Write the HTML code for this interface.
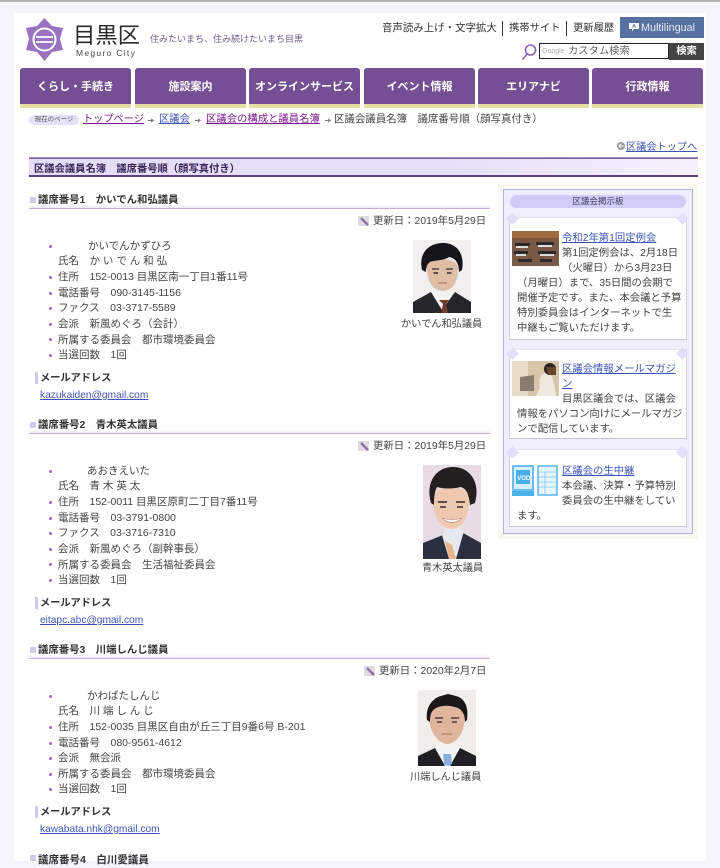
<!DOCTYPE html>
<html lang="ja"><head><meta charset="utf-8"><title>区議会議員名簿</title>
<style>
html,body{margin:0;padding:0;background:#f5f3fc}
body{width:720px;height:861px;overflow:hidden;position:relative;font-family:"Liberation Sans","Noto Sans CJK JP",sans-serif;color:#444;font-size:10.5px}
#w{position:absolute;left:0;top:0;width:720px;height:861px;filter:blur(.35px)}
#p{position:absolute;left:14px;top:13px;width:692px;height:848px;background:#fff}
.t{position:absolute;white-space:nowrap;line-height:16px}
.a{color:#3d55b5;text-decoration:underline}
.v{color:#7b1c8c;text-decoration:underline}
.nav{position:absolute;top:68px;width:111px;height:36px;background:#744f93;border-bottom:4px solid #e6dda0;border-radius:3px 3px 0 0;color:#fff;font-weight:700;font-size:11px;line-height:38px;text-align:center;white-space:nowrap}
.h{position:absolute;left:29px;width:461px;height:13px;border-bottom:1.5px solid #c4aed8;background:linear-gradient(#fff 75%,#f0e8f6)}
.h i{position:absolute;left:1px;top:2px;width:6px;height:6px;background:#cfcbe8}
.h b{position:absolute;left:9px;top:-2px;font-size:10.4px;line-height:16px;color:#333;white-space:nowrap}
.dot{position:absolute;left:49px;width:3px;height:3px;border-radius:50%;background:#9a6fc0}
.m{position:absolute;left:35px;width:3px;height:12px;background:#cfcbe8}
.card{position:absolute;left:509px;width:176px;background:#fff;border:1px solid #d4d4e0;border-top-color:#e2e2f2;border-bottom:1.5px solid #c6c6d0}
.cn{position:absolute;width:9px;height:9px;background:#e2dff8;transform:rotate(45deg)}
.s{font-size:10.35px}
.l{font-weight:700;color:#333;font-size:10.2px}
.mail{font-size:10.2px}
.ph{font-size:10.2px}
svg{position:absolute;display:block}
</style></head><body><div id="w">
<div style="position:absolute;left:0;top:0;width:720px;height:2px;background:#b5b5b5"></div>
<div id="p"></div>

<!-- logo -->
<svg style="left:25px;top:17px" width="40" height="45" viewBox="0 0 40 45">
<path d="M19.5 1 L27 9 L38 11 L35 22 L38 33 L27 35 L19.5 44 L12 35 L1 33 L4 22 L1 11 L12 9Z" fill="#9a72c0"/>
<circle cx="19.5" cy="22.5" r="11" fill="none" stroke="#fff" stroke-width="2"/>
<path d="M11 20H28M11 25H28" stroke="#fff" stroke-width="1.8"/>
</svg>
<div class="t" style="left:73px;top:22px;font-size:22.4px;line-height:28px;color:#2b2b2b">目黒区</div>
<div class="t" style="left:76px;top:45px;font-size:8.5px;color:#444;letter-spacing:1.3px">Meguro City</div>
<div class="t" style="left:150px;top:31px;font-size:9px;color:#6d5a86">住みたいまち、住み続けたいまち目黒</div>

<!-- util -->
<div class="t" style="left:382px;top:21px;font-size:10.45px;color:#333">音声読み上げ・文字拡大</div>
<div style="position:absolute;left:502px;top:21px;width:1px;height:15px;background:#333"></div>
<div class="t" style="left:509px;top:21px;font-size:10.3px;color:#333">携帯サイト</div>
<div style="position:absolute;left:566px;top:21px;width:1px;height:15px;background:#333"></div>
<div class="t" style="left:573px;top:21px;font-size:10.3px;color:#333">更新履歴</div>
<div style="position:absolute;left:620px;top:17px;width:84px;height:21px;background:#56709f"></div>
<svg style="left:628px;top:22px" width="12" height="10" viewBox="0 0 12 10"><path d="M1 1H11V7H6L4 9.5V7H1Z" fill="#fff"/><path d="M4.5 5.5L6 2.5L7.5 5.5" stroke="#56709f" fill="none" stroke-width=".9"/></svg>
<div class="t" style="left:641px;top:20px;font-size:10.8px;color:#e8ecf6">Multilingual</div>

<!-- search -->
<svg style="left:520px;top:43px" width="18" height="18" viewBox="0 0 18 18"><circle cx="10.5" cy="7" r="5" fill="none" stroke="#8a63b8" stroke-width="1.6"/><path d="M7 11L2.5 16.5" stroke="#8a63b8" stroke-width="1.6"/></svg>
<div style="position:absolute;left:539px;top:43px;width:128px;height:14px;border:1px solid #222;background:#fff"></div>
<div class="t" style="left:542px;top:44px;font-size:7px;color:#aaa">Google</div>
<div class="t" style="left:568px;top:44px;font-size:10.3px;color:#666">カスタム検索</div>
<div style="position:absolute;left:669px;top:43px;width:35px;height:17px;background:#444;color:#fff;font-size:10.3px;font-weight:700;text-align:center;line-height:17px">検索</div>

<!-- nav -->
<div class="nav" style="left:20px">くらし・手続き</div>
<div class="nav" style="left:135px">施設案内</div>
<div class="nav" style="left:249px">オンラインサービス</div>
<div class="nav" style="left:364px">イベント情報</div>
<div class="nav" style="left:478px">エリアナビ</div>
<div class="nav" style="left:592px">行政情報</div>

<!-- breadcrumb -->
<div class="t" style="left:29px;top:115px;width:50px;height:10px;background:#e6e0f6;border-radius:5px;font-size:6.5px;line-height:10px;text-align:center;color:#555">現在のページ</div>
<div class="t v" style="left:83px;top:112px;font-size:10.2px">トップページ</div>
<svg style="left:148px;top:118px" width="6" height="5" viewBox="0 0 6 5"><path d="M0 2.5H4M3 .8L5.2 2.5L3 4.2" fill="none" stroke="#777" stroke-width="1"/></svg>
<div class="t a" style="left:159px;top:112px;font-size:10.3px">区議会</div>
<svg style="left:195px;top:118px" width="6" height="5" viewBox="0 0 6 5"><path d="M0 2.5H4M3 .8L5.2 2.5L3 4.2" fill="none" stroke="#777" stroke-width="1"/></svg>
<div class="t v" style="left:206px;top:112px;font-size:10.35px">区議会の構成と議員名簿</div>
<svg style="left:325px;top:118px" width="6" height="5" viewBox="0 0 6 5"><path d="M0 2.5H4M3 .8L5.2 2.5L3 4.2" fill="none" stroke="#777" stroke-width="1"/></svg>
<div class="t" style="left:334px;top:112px;font-size:10.45px;color:#444">区議会議員名簿　議席番号順（顔写真付き）</div>

<!-- top link -->
<svg style="left:617px;top:142px" width="8" height="8" viewBox="0 0 8 8"><circle cx="4" cy="4" r="4" fill="#999"/><path d="M6.5 4H2M4 2L2 4L4 6" stroke="#fff" fill="none"/></svg>
<div class="t a" style="left:626px;top:140px;font-size:10.2px">区議会トップへ</div>

<!-- title -->
<div style="position:absolute;left:29px;top:157px;width:669px;height:17px;border-top:1px solid #a890c0;border-bottom:2px solid #5f3f80;background:linear-gradient(90deg,#e6def8,#e6def8 62%,#f5f1fd);box-shadow:inset 0 1px 0 #7a5a9a"></div>
<div class="t" style="left:34px;top:162px;font-size:10.3px;font-weight:700;color:#3a2358">区議会議員名簿　議席番号順（顔写真付き）</div>

<!-- section 1 -->
<div class="h" style="top:195px"><i></i><b>議席番号1　かいでん和弘議員</b></div>
<svg style="left:358px;top:216px" width="13" height="10" viewBox="0 0 13 10"><rect width="11" height="10" fill="#ddd"/><path d="M3 2L10 9" stroke="#8a70a8" stroke-width="2.4"/></svg>
<div class="t" style="left:373px;top:214px;font-size:10.4px;color:#444">更新日：2019年5月29日</div>
<div class="dot" style="top:245px"></div>
<div class="t" style="left:88px;top:238px">かいでんかずひろ</div>
<div class="t" style="left:58px;top:253px">氏名　か い で ん 和 弘</div>
<div class="dot" style="top:276px"></div><div class="t" style="left:58px;top:269px">住所　152-0013 目黒区南一丁目1番11号</div>
<div class="dot" style="top:292px"></div><div class="t" style="left:58px;top:285px">電話番号　090-3145-1156</div>
<div class="dot" style="top:307px"></div><div class="t" style="left:58px;top:300px">ファクス　03-3717-5589</div>
<div class="dot" style="top:323px"></div><div class="t" style="left:58px;top:316px">会派　新風めぐろ（会計）</div>
<div class="dot" style="top:338px"></div><div class="t" style="left:58px;top:332px">所属する委員会　都市環境委員会</div>
<div class="dot" style="top:354px"></div><div class="t" style="left:58px;top:347px">当選回数　1回</div>
<div class="m" style="top:372px"></div>
<div class="t l" style="left:40px;top:371px">メールアドレス</div>
<div class="t a mail" style="left:40px;top:388px">kazukaiden@gmail.com</div>
<svg style="left:413px;top:240px" width="58" height="73" viewBox="0 0 58 73">
<rect width="58" height="73" fill="#f1f0ef"/>
<path d="M0 73V62L18 52L29 58L42 52L58 62V73Z" fill="#25252b"/>
<path d="M18 52L29 70L42 52L37 47H23Z" fill="#f4f2f0"/><path d="M26 60H36L33 64L35 73H28L30 64Z" fill="#6e3a2a"/>
<path d="M14 28C14 44 22 51 30 51C38 51 45 44 45 28C45 16 14 16 14 28Z" fill="#e0bda5"/>
<path d="M9 30C5 12 17 3 30 3C44 3 52 14 49 30L46 32C46 24 43 18 36 17C30 21 21 20 17 22C14 24 13 28 13 32Z" fill="#15151a"/>
<path d="M19 29H26M33 29H40" stroke="#35282a" stroke-width="1.3"/>
<path d="M20.5 33H25M34 33H38.5" stroke="#3c2a28" stroke-width="1.4"/>
<path d="M25 43H34" stroke="#a87060" stroke-width="1"/>
</svg>
<div class="t ph" style="left:401px;top:317px">かいでん和弘議員</div>

<!-- section 2 -->
<div class="h" style="top:420px"><i></i><b>議席番号2　青木英太議員</b></div>
<svg style="left:358px;top:441px" width="13" height="10" viewBox="0 0 13 10"><rect width="11" height="10" fill="#ddd"/><path d="M3 2L10 9" stroke="#8a70a8" stroke-width="2.4"/></svg>
<div class="t" style="left:373px;top:439px;font-size:10.4px;color:#444">更新日：2019年5月29日</div>
<div class="dot" style="top:470px"></div>
<div class="t" style="left:87px;top:463px">あおきえいた</div>
<div class="t" style="left:58px;top:478px">氏名　青 木 英 太</div>
<div class="dot" style="top:501px"></div><div class="t" style="left:58px;top:494px">住所　152-0011 目黒区原町二丁目7番11号</div>
<div class="dot" style="top:517px"></div><div class="t" style="left:58px;top:510px">電話番号　03-3791-0800</div>
<div class="dot" style="top:532px"></div><div class="t" style="left:58px;top:525px">ファクス　03-3716-7310</div>
<div class="dot" style="top:548px"></div><div class="t" style="left:58px;top:541px">会派　新風めぐろ（副幹事長）</div>
<div class="dot" style="top:563px"></div><div class="t" style="left:58px;top:557px">所属する委員会　生活福祉委員会</div>
<div class="dot" style="top:579px"></div><div class="t" style="left:58px;top:572px">当選回数　1回</div>
<div class="m" style="top:597px"></div>
<div class="t l" style="left:40px;top:596px">メールアドレス</div>
<div class="t a mail" style="left:40px;top:613px">eitapc.abc@gmail.com</div>
<svg style="left:423px;top:465px" width="58" height="94" viewBox="0 0 58 94">
<rect width="58" height="94" fill="#e8dbe6"/>
<path d="M0 94V78L20 70L29 80L40 68L58 78V94Z" fill="#2b3040"/>
<path d="M19 70L26 94H33L41 66L36 60H23Z" fill="#e6e8f0"/><path d="M22 76L26 94H33L29 80Z" fill="#e8b48a"/>
<path d="M10 34C10 54 20 64 28 64C38 64 46 54 46 34C46 18 10 18 10 34Z" fill="#eec9ae"/>
<path d="M8 38C2 16 14 2 30 2C46 2 58 16 52 38L47 40C46 30 44 24 38 22C30 24 20 24 14 22C11 28 11 34 11 40Z" fill="#241f1e"/>
<path d="M15 37H24M33 37H42" stroke="#2f2420" stroke-width="1.5"/>
<path d="M17 42H23M34 42H40" stroke="#3a2a26" stroke-width="1.4"/>
<path d="M19 53Q29 62 39 53Q29 56 19 53Z" fill="#fff" stroke="#a8645a" stroke-width=".5"/>
</svg>
<div class="t ph" style="left:422px;top:561px">青木英太議員</div>

<!-- section 3 -->
<div class="h" style="top:645px"><i></i><b>議席番号3　川端しんじ議員</b></div>
<svg style="left:364px;top:666px" width="13" height="10" viewBox="0 0 13 10"><rect width="11" height="10" fill="#ddd"/><path d="M3 2L10 9" stroke="#8a70a8" stroke-width="2.4"/></svg>
<div class="t" style="left:379px;top:664px;font-size:10.4px;color:#444">更新日：2020年2月7日</div>
<div class="dot" style="top:695px"></div>
<div class="t" style="left:87px;top:688px">かわばたしんじ</div>
<div class="t" style="left:58px;top:703px">氏名　川 端 し ん じ</div>
<div class="dot" style="top:726px"></div><div class="t" style="left:58px;top:719px">住所　152-0035 目黒区自由が丘三丁目9番6号 B-201</div>
<div class="dot" style="top:742px"></div><div class="t" style="left:58px;top:735px">電話番号　080-9561-4612</div>
<div class="dot" style="top:757px"></div><div class="t" style="left:58px;top:750px">会派　無会派</div>
<div class="dot" style="top:773px"></div><div class="t" style="left:58px;top:766px">所属する委員会　都市環境委員会</div>
<div class="dot" style="top:788px"></div><div class="t" style="left:58px;top:781px">当選回数　1回</div>
<div class="m" style="top:806px"></div>
<div class="t l" style="left:40px;top:805px">メールアドレス</div>
<div class="t a mail" style="left:40px;top:822px">kawabata.nhk@gmail.com</div>
<svg style="left:418px;top:690px" width="58" height="76" viewBox="0 0 58 76">
<rect width="58" height="76" fill="#f0edeb"/>
<path d="M0 76V66L17 58L29 68L42 58L58 66V76Z" fill="#1f2026"/>
<path d="M17 58L27 76H32L42 58L36 52H23Z" fill="#f3f3f3"/><path d="M25 64H33L34 74L30 76L26 74Z" fill="#88afdc"/>
<path d="M11 26C11 44 22 54 29 54C37 54 47 44 47 26C47 10 11 10 11 26Z" fill="#e0b59c"/>
<path d="M9 30C7 14 18 7 23 6L30 4L38 6C46 8 51 16 49 30L47 32C47 24 44 20 40 18C32 15 24 15 18 18C13 21 12 25 12 32Z" fill="#1a1718"/>
<path d="M17 28H25M33 28H41" stroke="#3a2826" stroke-width="1.2"/>
<path d="M19 32H24M34 32H39" stroke="#3a2826" stroke-width="1.2"/>
<path d="M24 44H34" stroke="#a66a5a" stroke-width="1"/>
</svg>
<div class="t ph" style="left:410px;top:770px">川端しんじ議員</div>

<!-- section 4 -->
<div style="position:absolute;left:30px;top:855px;width:6px;height:6px;background:#cfcbe8"></div>
<div class="t" style="left:38px;top:852px;font-weight:700;color:#333">議席番号4　白川愛議員</div>

<!-- sidebar -->
<div style="position:absolute;left:498px;top:184px;width:200px;height:355px;background:#f9f8f3"></div>
<div style="position:absolute;left:503px;top:189px;width:188px;height:343px;background:#eeeefe;border:1px solid #b0b0e0"></div>
<div style="position:absolute;left:510px;top:195px;width:176px;height:13px;border-radius:7px;background:#cfcdf8"></div>
<div class="t" style="left:510px;top:193px;width:176px;text-align:center;font-size:8.5px;color:#3a3a5a">区議会掲示板</div>

<div class="card" style="top:217px;height:121px"></div>
<div class="cn" style="left:508px;top:214px"></div><div class="cn" style="left:678px;top:214px"></div>
<svg style="left:512px;top:231px" width="47" height="35" viewBox="0 0 47 35">
<rect width="47" height="35" fill="#7a5a45"/><rect width="47" height="7" fill="#a06a40"/>
<path d="M3 12H18V15H3ZM24 11H42V14H24ZM2 20H16V23H2ZM26 20H44V23H26ZM6 28H20V31H6ZM28 28H40V31H28Z" fill="#2a2a2e"/>
<path d="M4 15H16V17H4ZM26 14H40V16H26ZM4 23H14V25H4ZM28 23H42V25H28Z" fill="#ddd"/>
</svg>
<div class="t a s" style="left:562px;top:231px">令和2年第1回定例会</div>
<div class="t s" style="left:562px;top:246px">第1回定例会は、2月18日</div>
<div class="t s" style="left:562px;top:261px">（火曜日）から3月23日</div>
<div class="t s" style="left:517px;top:276px">（月曜日）まで、35日間の会期で</div>
<div class="t s" style="left:517px;top:291px">開催予定です。また、本会議と予算</div>
<div class="t s" style="left:517px;top:306px">特別委員会はインターネットで生</div>
<div class="t s" style="left:517px;top:321px">中継もご覧いただけます。</div>

<div class="card" style="top:349px;height:88px"></div>
<div class="cn" style="left:508px;top:349px"></div><div class="cn" style="left:678px;top:349px"></div>
<svg style="left:512px;top:361px" width="47" height="35" viewBox="0 0 47 35">
<rect width="47" height="35" fill="#d8c4a8"/><rect x="0" width="16" height="35" fill="#e8dcc8"/>
<path d="M8 16L22 14V30H8Z" fill="#8a7c70"/><path d="M28 26C26 16 30 12 34 12C40 12 42 18 44 35H24Z" fill="#f0e8dc"/>
<circle cx="38" cy="8" r="6" fill="#2a2420"/><path d="M34 6H44V14H36Z" fill="#6a4630"/>
</svg>
<div class="t a s" style="left:562px;top:362px">区議会情報メールマガジ</div>
<div class="t a s" style="left:562px;top:377px">ン</div>
<div class="t s" style="left:562px;top:392px">目黒区議会では、区議会</div>
<div class="t s" style="left:517px;top:407px">情報をパソコン向けにメールマガジ</div>
<div class="t s" style="left:517px;top:422px">ンで配信しています。</div>

<div class="card" style="top:449px;height:76px"></div>
<div class="cn" style="left:508px;top:448px"></div><div class="cn" style="left:678px;top:448px"></div>
<svg style="left:512px;top:465px" width="47" height="32" viewBox="0 0 47 32">
<rect x="1" y="1" width="20" height="24" fill="#d8f0fc" stroke="#4ab0e8" stroke-width="1.6"/>
<rect x="4" y="5" width="14" height="14" fill="#4ab0e8"/>
<text x="5.2" y="15" font-size="6" font-weight="700" fill="#fff" font-family="Liberation Sans">VOD</text>
<path d="M0 26H22V31H0Z" fill="#4ab0e8"/>
<rect x="26" y="1" width="19" height="29" fill="#e8f6fd" stroke="#4ab0e8" stroke-width="1.4"/>
<path d="M26 7H45M26 12H45M26 17H45M26 22H45M33 7V30" stroke="#7cc8f0" stroke-width=".8"/>
</svg>
<div class="t a s" style="left:562px;top:464px">区議会の生中継</div>
<div class="t s" style="left:562px;top:479px">本会議、決算・予算特別</div>
<div class="t s" style="left:562px;top:494px">委員会の生中継をしてい</div>
<div class="t s" style="left:517px;top:509px">ます。</div>
</div></body></html>
